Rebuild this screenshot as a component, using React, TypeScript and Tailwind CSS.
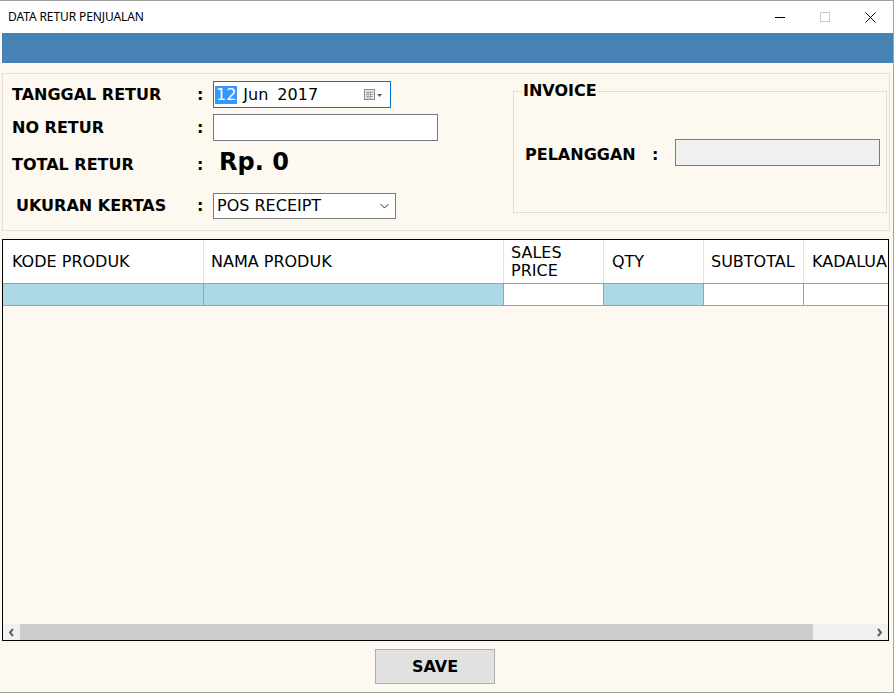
import React from "react";

const cols = [
  { label: "KODE PRODUK", w: "w-[201px]", pl: "pl-[9px]", blue: true },
  { label: "NAMA PRODUK", w: "w-[300px]", pl: "pl-[7px]", blue: true },
  { label: "SALES\nPRICE", w: "w-[100px]", pl: "pl-[7px]", blue: false },
  { label: "QTY", w: "w-[100px]", pl: "pl-[8px]", blue: true },
  { label: "SUBTOTAL", w: "w-[100px]", pl: "pl-[7px]", blue: false },
  { label: "KADALUARSA", w: "w-[100px]", pl: "pl-[8px]", blue: false },
];

export default function App() {
  return (
    <div
      className="w-[894px] h-[693px] bg-[#fdf9f0] border-t border-r border-b border-[#a3a3a3] flex flex-col overflow-hidden"
      style={{ fontFamily: "'DejaVu Sans', Verdana, sans-serif" }}
    >
      {/* Title bar */}
      <div className="h-[32px] shrink-0 bg-white flex items-center relative">
        <span
          className="pl-[8px] text-[12px] text-black tracking-[-0.1px]"
          style={{ fontFamily: "'Noto Sans', 'Open Sans', sans-serif" }}
        >
          DATA RETUR PENJUALAN
        </span>
        <div className="ml-auto flex items-center h-full">
          <div className="w-[45px] h-full flex items-center justify-center">
            <div className="w-[10px] h-[1px] bg-black" />
          </div>
          <div className="w-[45px] h-full flex items-center justify-center">
            <div className="w-[10px] h-[10px] border border-[#cccccc]" />
          </div>
          <div className="w-[46px] h-full flex items-center justify-center">
            <svg width="11" height="11" viewBox="0 0 11 11">
              <path d="M0.5 0.5 L10.5 10.5 M10.5 0.5 L0.5 10.5" stroke="#000" strokeWidth="1" />
            </svg>
          </div>
        </div>
      </div>

      {/* Blue bar */}
      <div className="h-[30px] shrink-0 ml-[2px] bg-[#4682b4]" />

      {/* Body */}
      <div className="flex-1 flex flex-col pt-[10px]">
        {/* Top panel */}
        <div className="ml-[2px] mr-[3px] h-[158px] border border-[#e4e0d8] flex">
          <div className="flex-1 flex flex-col pl-[9px]">
            <div className="mt-[7px] h-[27px] flex items-center">
              <span className="w-[185px] font-bold text-[16px] text-black">TANGGAL RETUR</span>
              <span className="w-[16px] font-bold text-[16px] text-black">:</span>
              <div className="w-[178px] h-[27px] border border-[#0078d7] bg-white flex items-center pl-[1px] text-[16px] text-black">
                <span className="bg-[#3399ff] text-white px-[1px] leading-[18px]">12</span>
                <span className="ml-[6px]">Jun</span>
                <span className="ml-[9px]">2017</span>
                <svg className="ml-auto mr-[7px]" width="19" height="12" viewBox="0 0 19 12">
                  <rect x="0.5" y="0.5" width="10" height="10" fill="#e8e8e8" stroke="#8a8a8a" />
                  <path d="M2 3.5 H9 M2 5.5 H9 M2 7.5 H9 M4 2 V10 M6.5 2 V10" stroke="#a8a8a8" strokeWidth="1" />
                  <path d="M13 5 L18 5 L15.5 8 Z" fill="#5a5a5a" />
                </svg>
              </div>
            </div>
            <div className="mt-[6px] h-[27px] flex items-center">
              <span className="w-[185px] font-bold text-[16px] text-black">NO RETUR</span>
              <span className="w-[16px] font-bold text-[16px] text-black">:</span>
              <div className="w-[225px] h-[27px] border border-[#7a7a7a] bg-white" />
            </div>
            <div className="h-[46px] flex items-center">
              <span className="w-[185px] font-bold text-[16px] text-black pt-[1px]">TOTAL RETUR</span>
              <span className="w-[16px] font-bold text-[16px] text-black pt-[1px]">:</span>
              <span className="pl-[6px] font-bold text-[24px] text-black -mt-[4px]">Rp. 0</span>
            </div>
            <div className="mt-[6px] h-[26px] flex items-center">
              <span className="w-[185px] pl-[4px] font-bold text-[16px] text-black">UKURAN KERTAS</span>
              <span className="w-[16px] font-bold text-[16px] text-black">:</span>
              <div className="w-[183px] h-[26px] border border-[#7a7a7a] bg-white flex items-center pl-[3px] text-[16px] text-black">
                <span>POS RECEIPT</span>
                <svg className="ml-auto mr-[6px]" width="9" height="6" viewBox="0 0 9 6">
                  <path d="M0.5 1 L4.5 5 L8.5 1" stroke="#333" strokeWidth="1" fill="none" />
                </svg>
              </div>
            </div>
          </div>

          {/* Invoice groupbox */}
          <div className="w-[374px] mt-[17px] h-[122px] mr-[2px] border border-[#dcdcdc] relative">
            <span className="absolute -top-[11px] left-[8px] px-[1px] bg-[#fdf9f0] font-bold text-[16px] text-black leading-[20px]">
              INVOICE
            </span>
            <div className="mt-[47px] h-[27px] flex items-center pl-[11px]">
              <span className="w-[127px] font-bold text-[16px] text-black pt-[4px]">PELANGGAN</span>
              <span className="w-[23px] font-bold text-[16px] text-black pt-[4px]">:</span>
              <div className="w-[205px] h-[27px] border border-[#7a7a7a] bg-[#f0f0f0]" />
            </div>
          </div>
        </div>

        {/* Grid */}
        <div className="mt-[8px] ml-[2px] mr-[4px] h-[402px] border border-black flex flex-col overflow-hidden">
          <div className="h-[44px] flex bg-white border-b border-[#a0a0a0] shrink-0">
            {cols.map((c, i) => (
              <div
                key={i}
                className={`${c.w} ${c.pl} shrink-0 h-full border-r border-[#e3e3e3] flex items-center text-[16px] text-black leading-[18px] whitespace-pre overflow-hidden`}
              >
                {c.label}
              </div>
            ))}
          </div>
          <div className="h-[22px] flex border-b border-[#a0a0a0] shrink-0">
            {cols.map((c, i) => (
              <div
                key={i}
                className={`${c.w} shrink-0 h-full border-r border-[#a0a0a0] ${c.blue ? "bg-[#add8e6]" : "bg-white"}`}
              />
            ))}
          </div>
          <div className="flex-1" />
          <div className="h-[16px] flex shrink-0">
            <div className="w-[17px] bg-[#f0f0f0] flex items-center justify-center">
              <svg width="7" height="9" viewBox="0 0 7 9">
                <path d="M5 1 L2 4.5 L5 8" stroke="#606060" strokeWidth="2" fill="none" />
              </svg>
            </div>
            <div className="w-[793px] bg-[#cdcdcd]" />
            <div className="flex-1 bg-[#f0f0f0]" />
            <div className="w-[17px] bg-[#f0f0f0] flex items-center justify-center">
              <svg width="7" height="9" viewBox="0 0 7 9">
                <path d="M2 1 L5 4.5 L2 8" stroke="#606060" strokeWidth="2" fill="none" />
              </svg>
            </div>
          </div>
        </div>

        {/* Footer */}
        <div className="flex-1 flex justify-start items-start pt-[8px] pl-[375px]">
          <div className="w-[120px] h-[35px] bg-[#e1e1e1] border border-[#adadad] flex items-center justify-center font-bold text-[16px] text-black">
            SAVE
          </div>
        </div>
      </div>
    </div>
  );
}
